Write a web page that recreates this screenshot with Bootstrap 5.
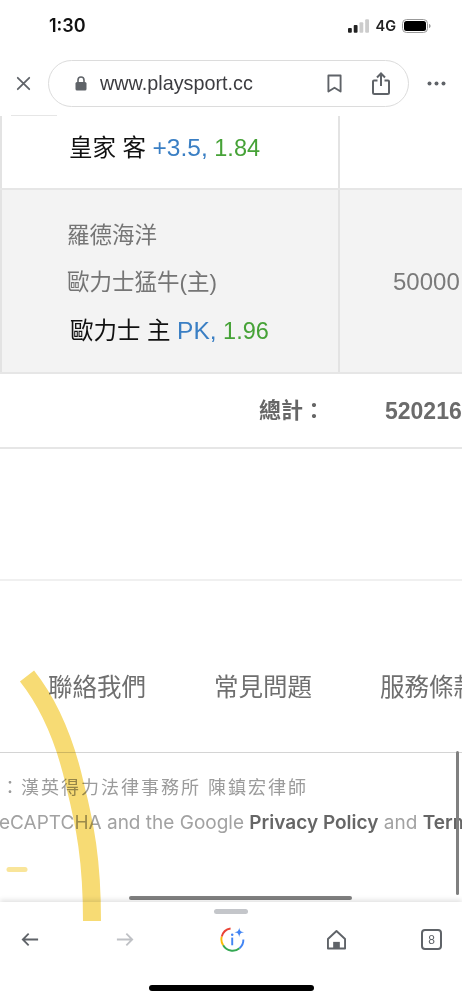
<!DOCTYPE html>
<html lang="zh-Hant">
<head>
<meta charset="utf-8">
<title>playsport</title>
<link href="https://cdn.jsdelivr.net/npm/bootstrap@5.3.0/dist/css/bootstrap.min.css" rel="stylesheet">
<style>
html,body{margin:0;background:#fff;}
body{font-family:"Liberation Sans","Noto Sans CJK TC",sans-serif;overflow:hidden;}
.phone{width:462px;height:1000px;position:relative;overflow:hidden;background:#fff;}
.statusbar{height:57px;padding:12px 31px 0 49px;}
.clock{font-size:18px;font-weight:600;color:#111;font-family:Inter,"Liberation Sans",sans-serif;line-height:28px;}
.sysicons{margin-top:7px;gap:6px;}
.net{font-size:14.500px;font-weight:600;color:#222;font-family:Inter,"Liberation Sans",sans-serif;line-height:14px;}
.chrome{height:58px;padding:3px 16px 0 16px;}
.urlpill{width:361px;height:47px;border:1px solid #dcdcdc;border-radius:24px;margin-left:17px;margin-right:18px;padding:0 18px 0 26px;}
.urltext{font-size:19.800px;color:#3c3c40;margin-left:13px;flex:1;font-family:"Liberation Sans",sans-serif;}
.bookmk{margin-right:30px;}
.dots{margin-top:21px;}
.pagearea{height:789px;overflow:hidden;position:relative;background:#fff;}
.topstub{width:46px;height:1px;margin-left:11px;background:#e6e6e6;}
.trow{display:flex;width:620px;}
.cellmain{width:340px;flex:none;border-right:2px solid #e3e3e3;border-left:2px solid #e3e3e3;padding-left:66px;}
.cellside{flex:1;color:#7a7a7a;font-size:24px;padding-left:53px;}
.row1{height:74px;border-bottom:2px solid #e6e6e6;}
.row1 .cellmain{padding-top:15px;padding-left:67px;}
.row2{height:184px;background:#f3f3f3;border-bottom:2px solid #e6e6e6;}
.row2 .cellmain{padding-top:31px;padding-left:65px;}
.row2 .cellside{padding-top:74px;}
.picktxt{font-size:23.500px;color:#111;line-height:34px;white-space:nowrap;}
.oddsblue{color:#3a7fc4;font-size:24.500px;}
.oddsgreen{color:#46a237;font-size:23.500px;}
.teamtxt{font-size:22.500px;color:#757575;line-height:30px;margin-bottom:17px;white-space:nowrap;}
.row2 .picktxt{margin-left:3px;margin-top:-1px;}
.row3{height:75px;border-bottom:2px solid #e6e6e6;}
.totlabel{width:340px;flex:none;text-align:right;padding:22px 15px 0 0;font-size:22px;font-weight:700;color:#666;line-height:30px;}
.totval{padding:22px 0 0 45px;font-size:23px;font-weight:700;color:#6b6b6b;line-height:30px;}
.gapband{height:132px;border-bottom:2px solid #f0f0f0;}
.footlinks{height:172px;border-bottom:1.500px solid #d4d4d4;padding:92px 0 0 48px;gap:68px;width:640px;font-size:24.500px;line-height:30px;color:#6f6f6f;white-space:nowrap;}
.legal{width:720px;}
.legal1{font-size:18px;color:#9b9b9b;white-space:nowrap;letter-spacing:2px;padding-left:1px;height:48px;line-height:70px;}
.legal2{font-family:Inter,"Liberation Sans",sans-serif;font-size:19px;color:#a2a2a2;line-height:26px;white-space:nowrap;margin-left:-1px;padding-top:9px;}
.legal2 b{color:#666;font-weight:600;}
.scrollv{position:absolute;left:456px;top:636px;width:3px;height:144px;background:#808080;border-radius:2px;}
.scrollh{position:absolute;left:129px;top:781px;width:223px;height:4px;background:#808080;border-radius:2px;}
.toolbar{height:98px;position:absolute;left:0;right:0;top:902px;background:#fff;box-shadow:0 -2px 5px rgba(0,0,0,.12);}
.grab{width:34px;height:5px;border-radius:3px;background:#c4c6ca;position:absolute;left:214px;top:7px;}
.toolrow{padding-top:30px;padding-left:21px;}
.tforward{margin-left:77px;}
.tassist{margin-left:86px;margin-top:-5px;}
.thome{margin-left:82px;margin-top:-3px;}
.ttabs{margin-left:75px;margin-top:-3px;width:21px;height:21px;border:2px solid #5f6368;border-radius:4px;font-size:12px;color:#5f6368;}
.homebar{position:absolute;left:149px;top:83px;width:165px;height:6px;background:#000;border-radius:3px;}
.marker{position:absolute;left:0;top:0;pointer-events:none;mix-blend-mode:multiply;}
</style>
</head>
<body>
<div class="phone">
  <div class="statusbar d-flex justify-content-between align-items-start">
    <span class="clock">1:30</span>
    <span class="sysicons d-flex align-items-center">
      <svg width="21" height="14" viewBox="0 0 22 14"><rect x="0" y="9" width="4" height="5" rx="1" fill="#222"/><rect x="6" y="6" width="4" height="8" rx="1" fill="#222"/><rect x="12" y="3" width="4" height="11" rx="1" fill="#ccc"/><rect x="18" y="0" width="4" height="14" rx="1" fill="#ccc"/></svg>
      <span class="net">4G</span>
      <svg width="29" height="14" viewBox="0 0 29 14"><rect x=".5" y=".5" width="25" height="13" rx="4" fill="none" stroke="#999"/><rect x="2" y="2" width="22" height="10" rx="2.5" fill="#000"/><path d="M27 5v4c1-.3 1.600-1 1.600-2s-.6-1.700-1.600-2z" fill="#999"/></svg>
    </span>
  </div>
  <div class="chrome d-flex align-items-start">
    <svg class="mt-3" width="15" height="15" viewBox="0 0 17 17"><path d="M2 2l13 13M15 2L2 15" stroke="#5f6368" stroke-width="2" stroke-linecap="round"/></svg>
    <div class="urlpill d-flex align-items-center">
      <svg width="12" height="15" viewBox="0 0 12 15"><path d="M3 6V4a3 3 0 0 1 6 0v2" fill="none" stroke="#5f6368" stroke-width="1.600"/><rect x="0.500" y="6" width="11" height="8.500" rx="1.500" fill="#5f6368"/></svg>
      <span class="urltext">www.playsport.cc</span>
      <svg width="15" height="19" viewBox="0 0 16 20" class="bookmk"><path d="M1.500 1.500h13v17l-6.500-4-6.500 4z" fill="none" stroke="#5f6368" stroke-width="2" stroke-linejoin="round"/></svg>
      <svg width="18" height="23" viewBox="0 0 18 23"><path d="M9 14V2M5 5.500L9 1.500l4 4" fill="none" stroke="#5f6368" stroke-width="2"/><path d="M5.500 8.500H2a1 1 0 0 0-1 1V20.500a1.500 1.500 0 0 0 1.500 1.500h13a1.500 1.500 0 0 0 1.500-1.500V9.500a1 1 0 0 0-1-1H12.500" fill="none" stroke="#5f6368" stroke-width="2"/></svg>
    </div>
    <svg class="dots" width="19" height="5" viewBox="0 0 19 5"><circle cx="2.500" cy="2.500" r="2" fill="#5f6368"/><circle cx="9.500" cy="2.500" r="2" fill="#5f6368"/><circle cx="16.500" cy="2.500" r="2" fill="#5f6368"/></svg>
  </div>
  <div class="pagearea">
    <div class="topstub"></div>
    <div class="trow row1">
      <div class="cellmain"><div class="picktxt">皇家 客 <span class="oddsblue">+3.5,</span> <span class="oddsgreen">1.84</span></div></div>
      <div class="cellside"></div>
    </div>
    <div class="trow row2">
      <div class="cellmain">
        <div class="teamtxt">羅德海洋</div>
        <div class="teamtxt">歐力士猛牛(主)</div>
        <div class="picktxt">歐力士 主 <span class="oddsblue">PK,</span> <span class="oddsgreen">1.96</span></div>
      </div>
      <div class="cellside">50000</div>
    </div>
    <div class="trow row3">
      <div class="totlabel">總計：</div>
      <div class="totval">520216</div>
    </div>
    <div class="gapband"></div>
    <div class="footlinks d-flex">
      <span>聯絡我們</span><span>常見問題</span><span>服務條款</span>
    </div>
    <div class="legal">
      <div class="legal1">：漢英得力法律事務所 陳鎮宏律師</div>
      <div class="legal2">eCAPTCHA and the Google <b>Privacy Policy</b> and <b>Terms</b></div>
    </div>
    <div class="scrollv"></div>
    <div class="scrollh"></div>
  </div>
  <div class="toolbar">
    <div class="grab"></div>
    <div class="toolrow d-flex align-items-start">
      <svg width="18" height="15" viewBox="0 0 20 16"><path d="M19 8H2M8.500 1.500L2 8l6.500 6.500" fill="none" stroke="#5f6368" stroke-width="2"/></svg>
      <svg class="tforward" width="18" height="15" viewBox="0 0 20 16"><path d="M1 8h17M11.500 1.500L18 8l-6.500 6.500" fill="none" stroke="#bfc1c5" stroke-width="2"/></svg>
      <svg class="tassist" width="25" height="25" viewBox="0 0 26 26">
        <path d="M11 1.500A11.300 11.300 0 0 0 1.800 10" fill="none" stroke="#ea4335" stroke-width="2"/>
        <path d="M1.800 10a11.300 11.300 0 0 0 1.500 9" fill="none" stroke="#fbbc04" stroke-width="2"/>
        <path d="M3.300 19a11.300 11.300 0 0 0 17 3" fill="none" stroke="#34a853" stroke-width="2"/>
        <path d="M20.300 22a11.300 11.300 0 0 0 4-9" fill="none" stroke="#4285f4" stroke-width="2"/>
        <path d="M20 1c.5 3.500 1.500 4.500 5 5-3.500.5-4.500 1.500-5 5-.5-3.500-1.500-4.500-5-5 3.500-.5 4.500-1.500 5-5z" fill="#4285f4" transform="translate(0 -.5)"/>
        <rect x="11.700" y="11" width="2" height="8" fill="#4285f4"/><circle cx="12.700" cy="8" r="1.300" fill="#4285f4"/>
      </svg>
      <svg class="thome" width="19" height="21" viewBox="0 0 20 21"><path d="M10 1.500L1 10v10h18V10z" fill="none" stroke="#5f6368" stroke-width="2" stroke-linejoin="round"/><rect x="6.500" y="13" width="7" height="7" fill="#5f6368"/></svg>
      <span class="ttabs d-flex align-items-center justify-content-center">8</span>
    </div>
    <div class="homebar"></div>
  </div>
  <svg class="marker" width="462" height="1000" viewBox="0 0 462 1000">
    <path d="M27 676C50 705 66 745 75 785C85 825 92 860 92 921" fill="none" stroke="#f7db74" stroke-width="18" stroke-linecap="butt"/>
    <path d="M9 869.500H25" fill="none" stroke="#f9e59a" stroke-width="5" stroke-linecap="round"/>
  </svg>
</div>
<script src="https://cdn.jsdelivr.net/npm/bootstrap@5.3.0/dist/js/bootstrap.bundle.min.js"></script>
</body>
</html>
